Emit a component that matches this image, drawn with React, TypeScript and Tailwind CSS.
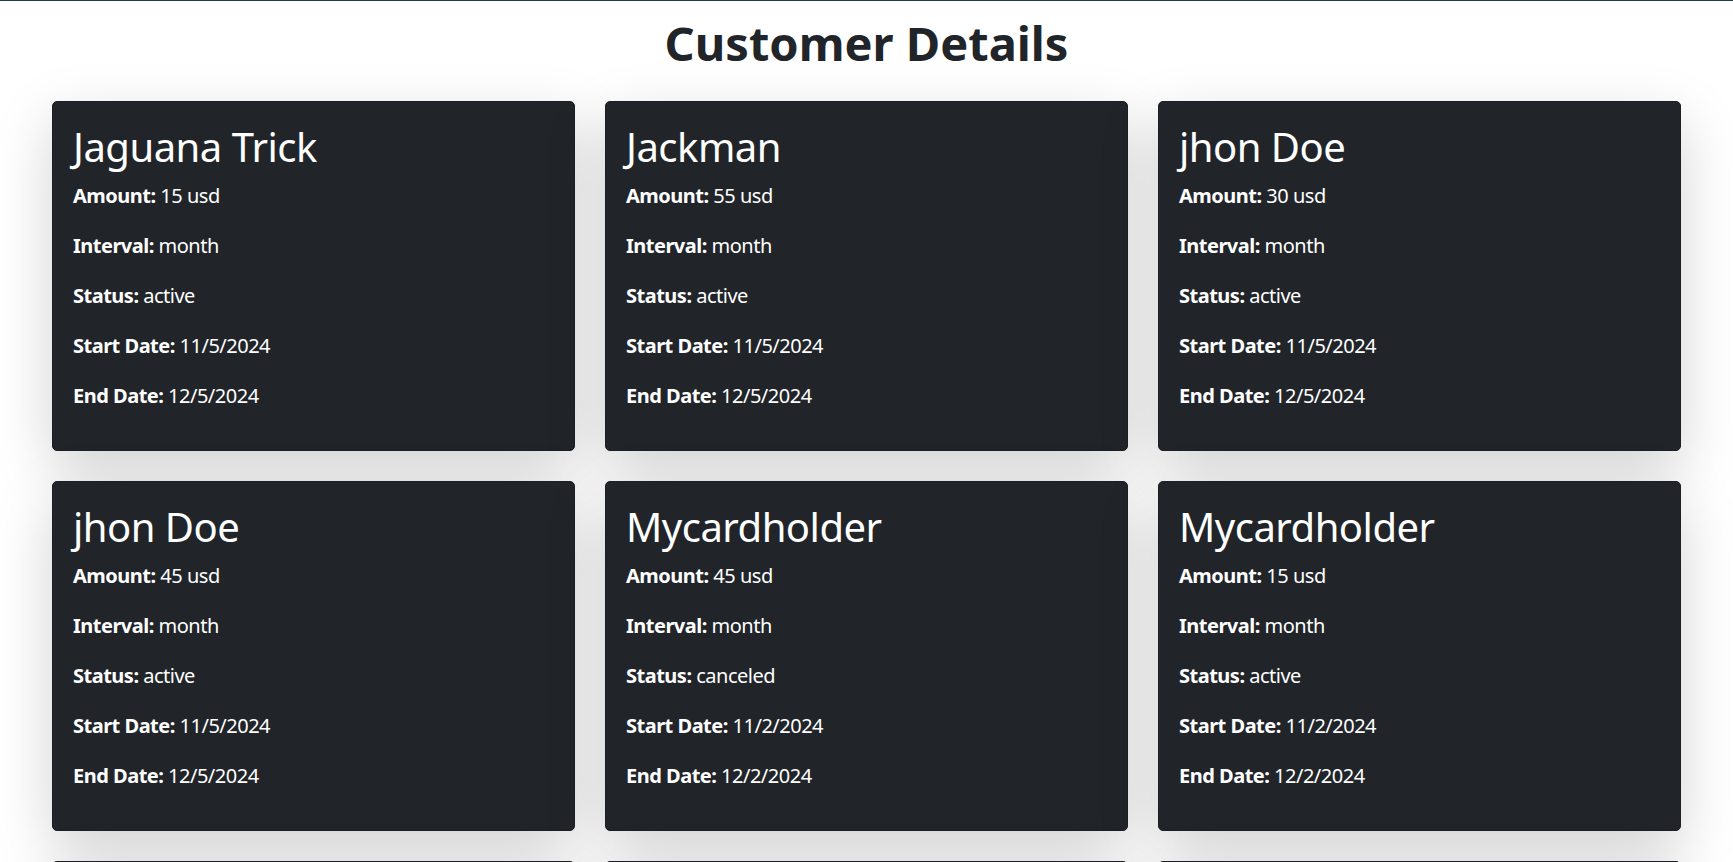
import React from 'react'

type Sub = {
  name: string
  amount: number
  interval: string
  status: string
  start: string
  end: string
}

const subs: Sub[] = [
  { name: 'Jaguana Trick', amount: 15, interval: 'month', status: 'active', start: '11/5/2024', end: '12/5/2024' },
  { name: 'Jackman', amount: 55, interval: 'month', status: 'active', start: '11/5/2024', end: '12/5/2024' },
  { name: 'jhon Doe', amount: 30, interval: 'month', status: 'active', start: '11/5/2024', end: '12/5/2024' },
  { name: 'jhon Doe', amount: 45, interval: 'month', status: 'active', start: '11/5/2024', end: '12/5/2024' },
  { name: 'Mycardholder', amount: 45, interval: 'month', status: 'canceled', start: '11/2/2024', end: '12/2/2024' },
  { name: 'Mycardholder', amount: 15, interval: 'month', status: 'active', start: '11/2/2024', end: '12/2/2024' },
  { name: 'Mycardholder', amount: 25, interval: 'month', status: 'active', start: '11/1/2024', end: '12/1/2024' },
  { name: 'jhon Doe', amount: 15, interval: 'month', status: 'active', start: '11/1/2024', end: '12/1/2024' },
  { name: 'Jackman', amount: 30, interval: 'month', status: 'canceled', start: '10/30/2024', end: '11/30/2024' },
]

function Field({ label, value }: { label: string; value: string }) {
  return (
    <p className="mb-5 text-[20px] leading-[30px]">
      <strong className="font-bold">{label}:</strong> {value}
    </p>
  )
}

function CustomerCard({ sub }: { sub: Sub }) {
  return (
    <div className="bg-[#212529] text-white tracking-[-0.5px] border border-[#1c1f23] rounded-[5px] shadow-[0_20px_60px_rgba(0,0,0,0.175)] px-5 pt-[21px] pb-[19px]">
      <h2 className="text-[40px] leading-[48px] font-normal mb-[10px]">{sub.name}</h2>
      <Field label="Amount" value={`${sub.amount} usd`} />
      <Field label="Interval" value={sub.interval} />
      <Field label="Status" value={sub.status} />
      <Field label="Start Date" value={sub.start} />
      <Field label="End Date" value={sub.end} />
    </div>
  )
}

export default function App() {
  return (
    <div
      className="min-h-screen bg-white text-[#212529] border-t border-[#1e3a44]"
      style={{ fontFamily: '"Noto Sans", "Open Sans", "Liberation Sans", sans-serif' }}
    >
      <h1 className="text-center text-[47px] leading-[60px] font-bold pt-[12px] mb-[28px]">
        Customer Details
      </h1>
      <div className="grid grid-cols-3 gap-[30px] px-[52px] pb-10">
        {subs.map((s, i) => (
          <CustomerCard key={i} sub={s} />
        ))}
      </div>
    </div>
  )
}
